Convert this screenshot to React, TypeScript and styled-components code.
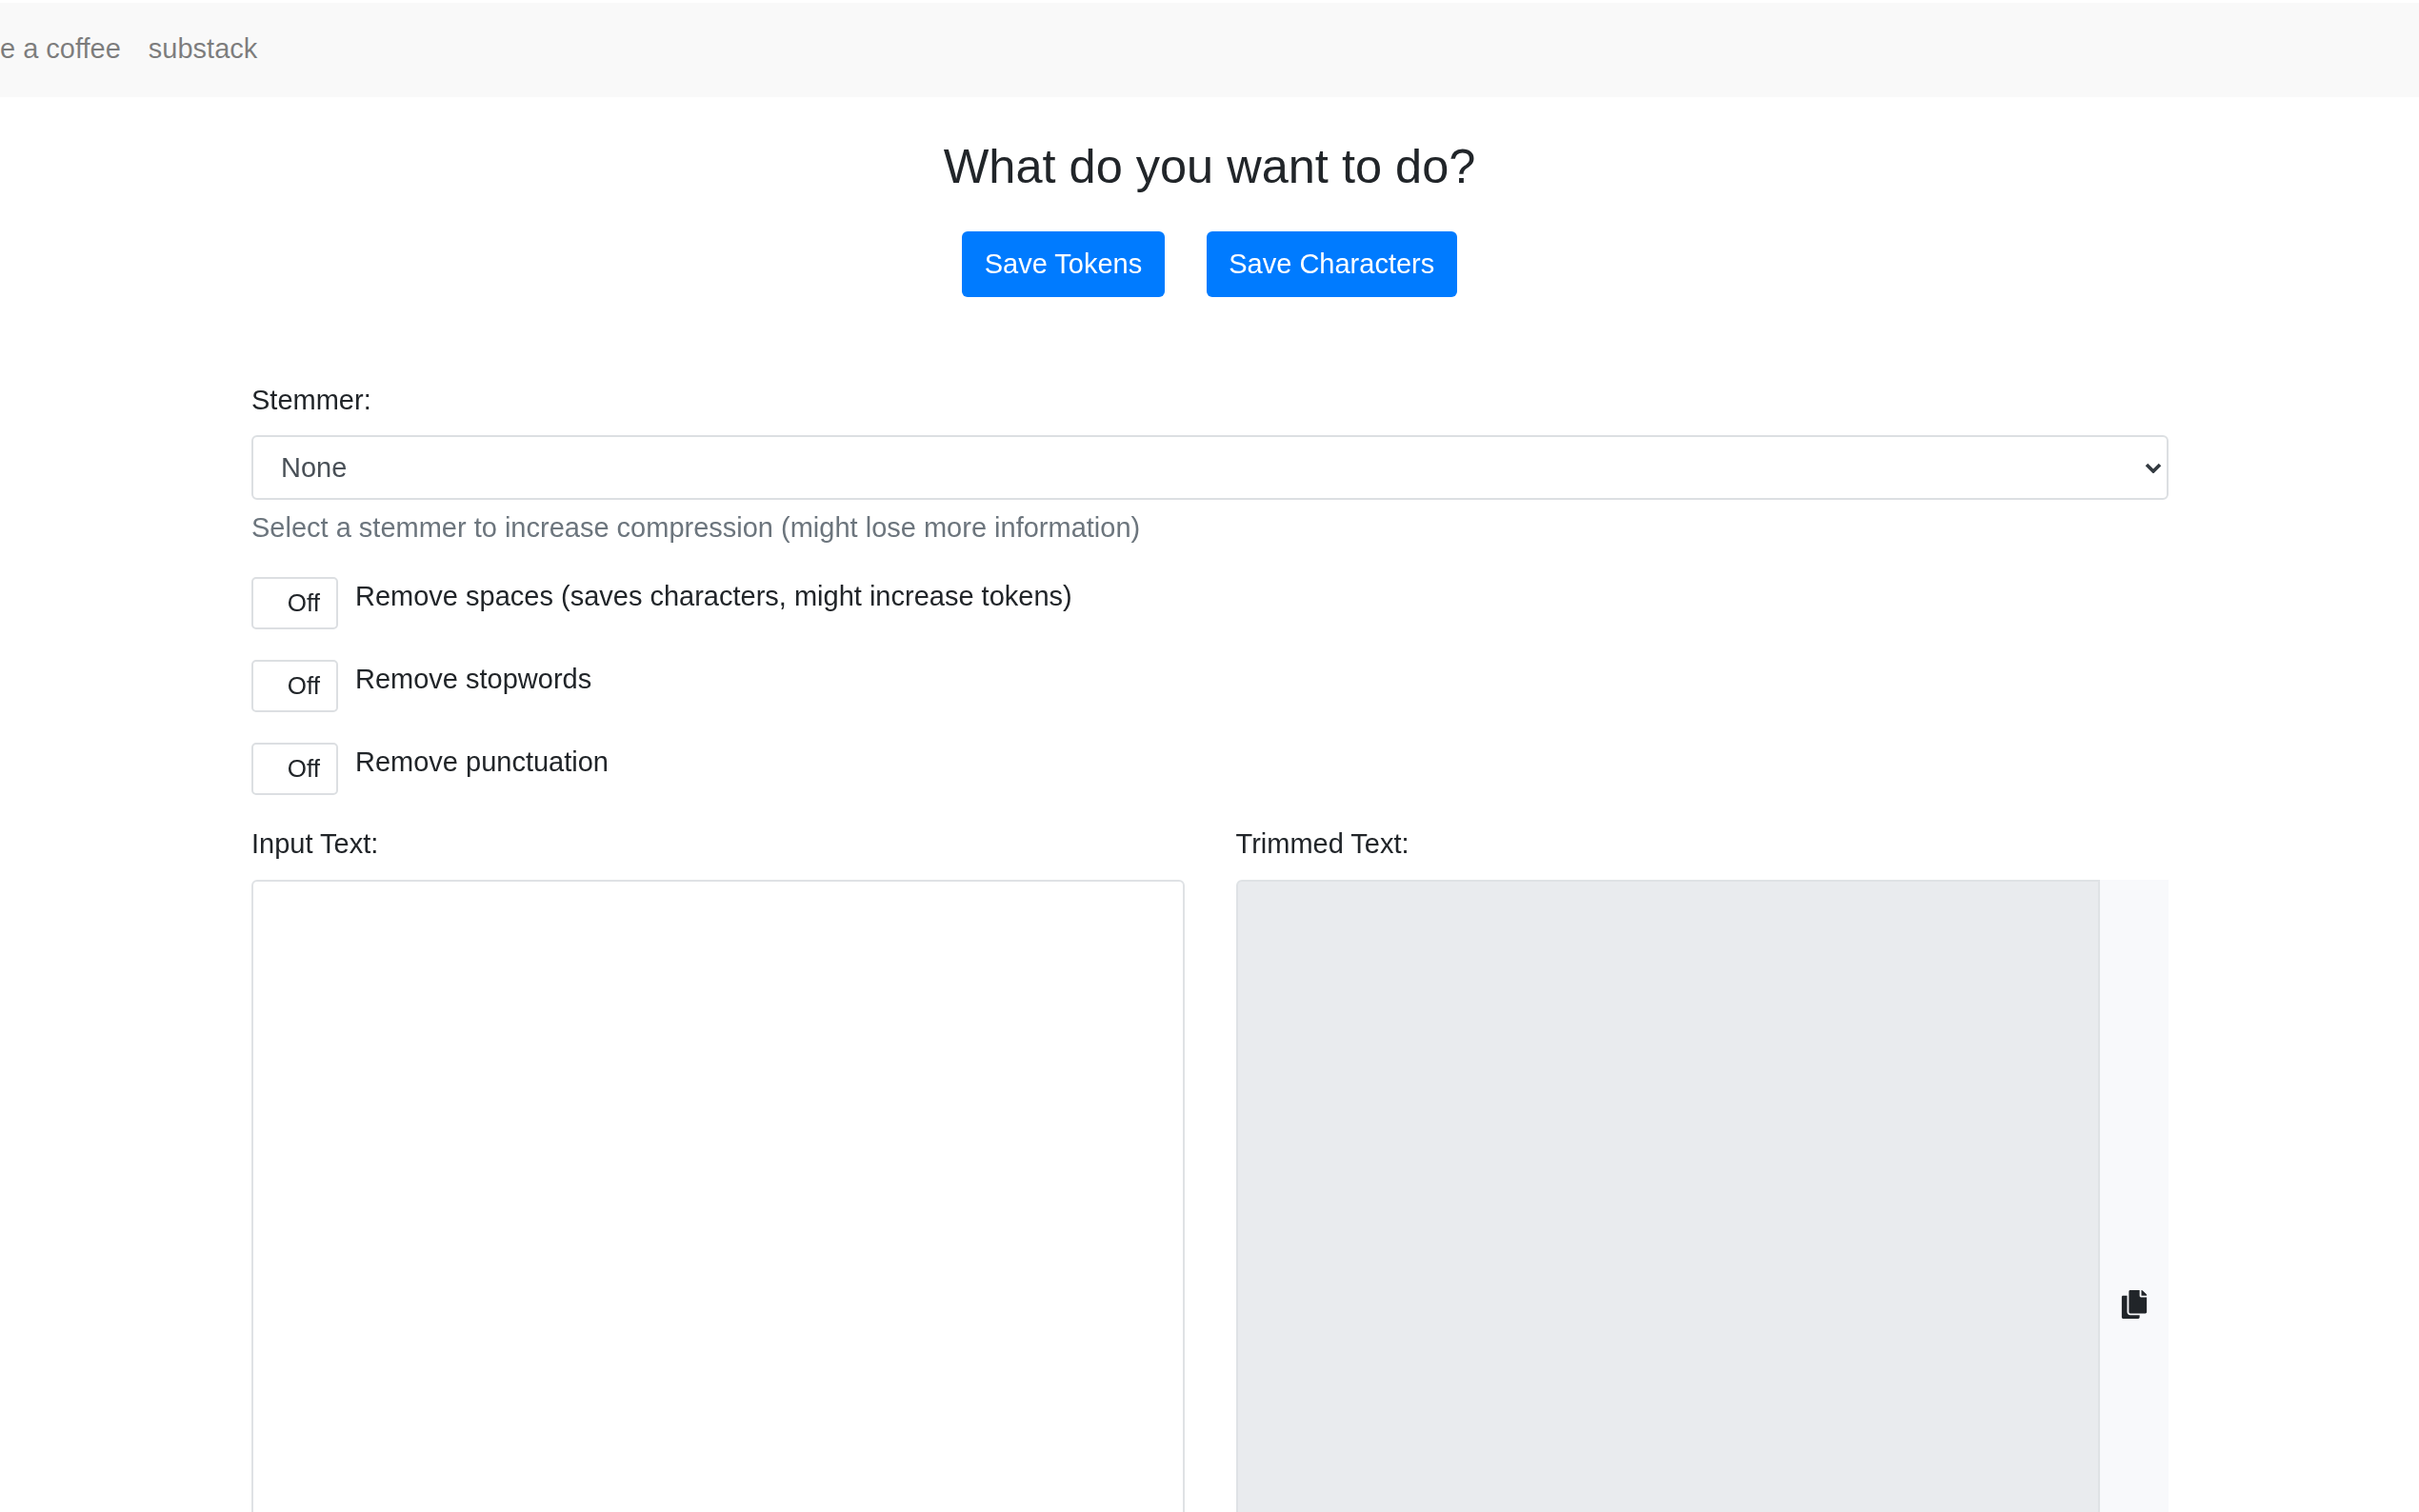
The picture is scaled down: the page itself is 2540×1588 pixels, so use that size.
import React from "react";
import styled, { createGlobalStyle } from "styled-components";
import { FaCopy } from "react-icons/fa";

const Global = createGlobalStyle`
  html, body { margin: 0; padding: 0; height: 100%; overflow: hidden; background: #fff; }
  body { font-family: "Liberation Sans", Arial, sans-serif; color: #212529; font-size: 29px; line-height: 39px; }
  * { box-sizing: border-box; }
`;

const Page = styled.div`
  filter: blur(0.6px);
`;

const Nav = styled.nav`
  margin-top: 3px;
  height: 99px;
  padding-bottom: 2px;
  background: #f9f9f9;
  display: flex;
  align-items: center;
  gap: 29px;
  overflow: hidden;
`;

const NavLink = styled.a`
  color: rgba(0, 0, 0, 0.5);
  font-size: 29px;
  text-decoration: none;
  white-space: nowrap;
`;

const Heading = styled.h3`
  margin: 46px 0 41px;
  font-size: 50.5px;
  line-height: 54px;
  font-weight: 400;
  text-align: center;
  color: #212529;
`;

const Actions = styled.div`
  display: flex;
  justify-content: center;
  gap: 44px;
  margin-bottom: 89px;
`;

const Primary = styled.button`
  height: 69px;
  padding: 0 23.5px;
  border: 0;
  border-radius: 6px;
  background: #007bff;
  color: #fff;
  font: 400 29px/39px "Liberation Sans", Arial, sans-serif;
`;

const Content = styled.main`
  padding: 0 263px 0 264px;
`;

const FieldLabel = styled.label`
  display: block;
  margin-bottom: 17px;
`;

const SelectWrap = styled.div`
  position: relative;
`;

const Select = styled.select`
  display: block;
  width: 100%;
  height: 68px;
  padding: 0 29px;
  appearance: none;
  border: 2px solid #dcdfe2;
  border-radius: 6px;
  background: #fff;
  color: #495057;
  font: 400 29px/39px "Liberation Sans", Arial, sans-serif;
`;

const Chevron = styled.svg`
  position: absolute;
  right: 7px;
  top: 28px;
  width: 18px;
  height: 12px;
  pointer-events: none;
`;

const Help = styled.small`
  display: block;
  margin: 10px 0 32px;
  font-size: 29px;
  line-height: 39px;
  color: #6c757d;
`;

const OptionRow = styled.div`
  display: flex;
  align-items: flex-start;
  gap: 18px;
  margin-bottom: 32px;
`;

const Toggle = styled.div`
  width: 91px;
  height: 55px;
  padding-right: 17px;
  padding-bottom: 2px;
  border: 2px solid #dcdfe2;
  border-radius: 5px;
  background: #fff;
  display: flex;
  align-items: center;
  justify-content: flex-end;
  font-size: 26px;
  line-height: 34px;
  color: #212529;
`;

const OptionText = styled.span`
  margin-top: 1px;
`;

const Columns = styled.div`
  display: grid;
  grid-template-columns: 1fr 1fr;
  gap: 54px;
  margin-top: 2px;
`;

const TextLabel = styled.label`
  display: block;
  margin-bottom: 18px;
`;

const InputArea = styled.textarea<{ $joined?: boolean }>`
  display: block;
  flex: 1;
  width: 100%;
  height: 891px;
  padding: 10px 20px;
  resize: none;
  border: 2px solid #dfe2e5;
  border-radius: ${(p) => (p.$joined ? "6px 0 0 6px" : "6px")};
  background: ${(p) => (p.$joined ? "#e9ebee" : "#fff")};
`;

const Joined = styled.div`
  display: flex;
`;

const CopyPanel = styled.div`
  flex: 0 0 72px;
  height: 891px;
  background: #f8f9fb;
  display: flex;
  align-items: center;
  justify-content: center;
  color: #212529;
  font-size: 30px;
`;

const options = [
  "Remove spaces (saves characters, might increase tokens)",
  "Remove stopwords",
  "Remove punctuation",
];

export default function App() {
  return (
    <Page>
      <Global />
      <Nav>
        <NavLink href="#">e a coffee</NavLink>
        <NavLink href="#">substack</NavLink>
      </Nav>
      <Heading>What do you want to do?</Heading>
      <Actions>
        <Primary>Save Tokens</Primary>
        <Primary>Save Characters</Primary>
      </Actions>
      <Content>
        <FieldLabel>Stemmer:</FieldLabel>
        <SelectWrap>
          <Select defaultValue="None">
            <option>None</option>
          </Select>
          <Chevron viewBox="0 0 18 12">
            <path d="M2 3l7 7 7-7" fill="none" stroke="#333a40" strokeWidth="3.6" />
          </Chevron>
        </SelectWrap>
        <Help>Select a stemmer to increase compression (might lose more information)</Help>
        {options.map((o) => (
          <OptionRow key={o}>
            <Toggle>Off</Toggle>
            <OptionText>{o}</OptionText>
          </OptionRow>
        ))}
        <Columns>
          <div>
            <TextLabel>Input Text:</TextLabel>
            <InputArea />
          </div>
          <div>
            <TextLabel>Trimmed Text:</TextLabel>
            <Joined>
              <InputArea $joined disabled />
              <CopyPanel>
                <FaCopy />
              </CopyPanel>
            </Joined>
          </div>
        </Columns>
      </Content>
    </Page>
  );
}
